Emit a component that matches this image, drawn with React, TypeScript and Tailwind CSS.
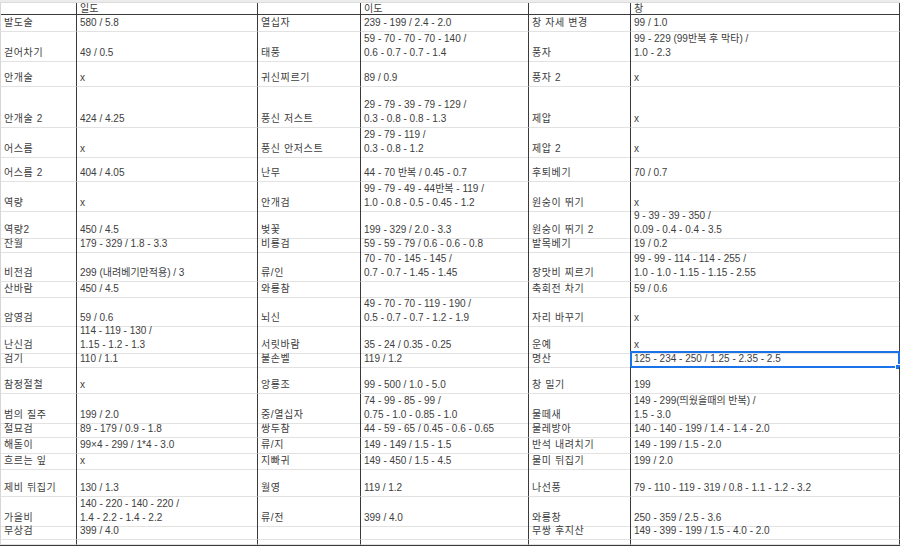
type Row = {
  h: string;
  cells: string[];
  selected?: number;
};

const rows: Row[] = [
  { h: "h-[17px]", cells: ["발도술", "580 / 5.8", "열십자", "239 - 199 / 2.4 - 2.0", "창 자세 변경", "99 / 1.0"] },
  {
    h: "h-[28px]",
    cells: ["걷어차기", "49 / 0.5", "태풍", "59 - 70 - 70 - 70 - 140 /\n0.6 - 0.7 - 0.7 - 1.4", "풍자", "99 - 229 (99반복 후 막타) /\n1.0 - 2.3"],
  },
  { h: "h-[27px]", cells: ["안개술", "x", "귀신찌르기", "89 / 0.9", "풍자 2", "x"] },
  {
    h: "h-[41px]",
    cells: ["안개술 2", "424 / 4.25", "풍신 저스트", "29 - 79 - 39 - 79 - 129 /\n0.3 - 0.8 - 0.8 - 1.3", "제압", "x"],
  },
  { h: "h-[26px]", cells: ["어스름", "x", "풍신 안저스트", "29 - 79 - 119 /\n0.3 - 0.8 - 1.2", "제압 2", "x"] },
  { h: "h-[28px]", cells: ["어스름 2", "404 / 4.05", "난무", "44 - 70 반복 / 0.45 - 0.7", "후퇴베기", "70 / 0.7"] },
  {
    h: "h-[27px]",
    cells: ["역량", "x", "안개검", "99 - 79 - 49 - 44반복 - 119 /\n1.0 - 0.8 - 0.5 - 0.45 - 1.2", "원숭이 뛰기", "x"],
  },
  {
    h: "h-[28px]",
    cells: ["역량2", "450 / 4.5", "벚꽃", "199 - 329 / 2.0 - 3.3", "원숭이 뛰기 2", "9 - 39 - 39 - 350 /\n0.09 - 0.4 - 0.4 - 3.5"],
  },
  { h: "h-[15px]", cells: ["잔월", "179 - 329 / 1.8 - 3.3", "비룡검", "59 - 59 - 79 / 0.6 - 0.6 - 0.8", "발목베기", "19 / 0.2"] },
  {
    h: "h-[30px]",
    cells: [
      "비전검",
      "299 (내려베기만적용) / 3",
      "류/인",
      "70 - 70 - 145 - 145 /\n0.7 - 0.7 - 1.45 - 1.45",
      "장맛비 찌르기",
      "99 - 99 - 114 - 114 - 255 /\n1.0 - 1.0 - 1.15 - 1.15 - 2.55",
    ],
  },
  { h: "h-[15px]", cells: ["산바람", "450 / 4.5", "와룡참", "", "축회전 차기", "59 / 0.6"] },
  {
    h: "h-[27px]",
    cells: ["암영검", "59 / 0.6", "뇌신", "49 - 70 - 70 - 119 - 190 /\n0.5 - 0.7 - 0.7 - 1.2 - 1.9", "자리 바꾸기", "x"],
  },
  { h: "h-[28px]", cells: ["난신검", "114 - 119 - 130 /\n1.15 - 1.2 - 1.3", "서릿바람", "35 - 24 / 0.35 - 0.25", "운예", "x"] },
  {
    h: "h-[15px]",
    cells: ["검기", "110 / 1.1", "불손벨", "119 / 1.2", "명산", "125 - 234 - 250 / 1.25 - 2.35 - 2.5"],
    selected: 5,
  },
  { h: "h-[27px]", cells: ["참정절철", "x", "앙룡조", "99 - 500 / 1.0 - 5.0", "창 밀기", "199"] },
  {
    h: "h-[28px]",
    cells: ["범의 질주", "199 / 2.0", "중/열십자", "74 - 99 - 85 - 99 /\n0.75 - 1.0 - 0.85 - 1.0", "물떼새", "149 - 299(띄웠을때의 반복) /\n1.5 - 3.0"],
  },
  {
    h: "h-[16px]",
    cells: ["절묘검", "89 - 179 / 0.9 - 1.8", "쌍두참", "44 - 59 - 65 / 0.45 - 0.6 - 0.65", "물레방아", "140 - 140 - 199 / 1.4 - 1.4 - 2.0"],
  },
  { h: "h-[16px]", cells: ["해돋이", "99×4 - 299 / 1*4 - 3.0", "류/지", "149 - 149 / 1.5 - 1.5", "반석 내려치기", "149 - 199 / 1.5 - 2.0"] },
  { h: "h-[15px]", cells: ["흐르는 잎", "x", "지빠귀", "149 - 450 / 1.5 - 4.5", "물미 뒤집기", "199 / 2.0"] },
  {
    h: "h-[28px]",
    cells: ["제비 뒤집기", "130 / 1.3", "월영", "119 / 1.2", "나선풍", "79 - 110 - 119 - 319 / 0.8 - 1.1 - 1.2 - 3.2"],
  },
  {
    h: "h-[27px]",
    cells: ["가을비", "140 - 220 - 140 - 220 /\n1.4 - 2.2 - 1.4 - 2.2", "류/전", "399 / 4.0", "와룡창", "250 - 359 / 2.5 - 3.6"],
  },
  { h: "h-[16px]", cells: ["무상검", "399 / 4.0", "", "", "무쌍 후지산", "149 - 399 - 199 / 1.5 - 4.0 - 2.0"] },
  { h: "h-[5px]", cells: ["", "", "", "", "", ""] },
];

const cols = "grid grid-cols-[77px_181px_103px_168px_102px_269px]";

function Cell({ text, index, selected }: { text: string; index: number; selected?: boolean }) {
  const label = index % 2 === 0;
  return (
    <div
      className={`relative flex items-end overflow-visible whitespace-pre border-b border-r border-b-[#e2e2e2] border-r-[#3a3a3a] px-[3px] pb-[1px] ${
        index === 0 ? "border-l border-l-[#d6d6d6]" : ""
      } ${label ? "tracking-[0.6px]" : ""}`}
    >
      <span className="leading-[14px]">{text}</span>
      {selected && (
        <>
          <div className="pointer-events-none absolute -left-px -top-px bottom-[-1px] right-[-1px] border-2 border-[#1a73e8]" />
          <div className="absolute bottom-[-3px] right-[-2px] h-[6px] w-[6px] border border-white bg-[#1a73e8]" />
        </>
      )}
    </div>
  );
}

export default function App() {
  return (
    <div
      className="h-[546px] w-[900px] overflow-hidden bg-white text-[10px] text-[#3d3d3d]"
      style={{ fontFamily: '"Liberation Sans", Arial, "Noto Sans CJK KR", sans-serif' }}
    >
      <div className="h-[3px] border-b border-[#dcdcdc] bg-[#ececec]" />
      <div className={`${cols} h-[12px] border-b border-[#3a3a3a]`}>
        {["", "일도", "", "이도", "", "창"].map((t, i) => (
          <div
            key={i}
            className={`flex items-center border-r border-[#3a3a3a] px-[3px] leading-[12px] ${
              i === 0 ? "border-l border-l-[#d6d6d6]" : ""
            }`}
          >
            {t}
          </div>
        ))}
      </div>
      {rows.map((row, r) => (
        <div key={r} className={`${cols} ${row.h}`}>
          {row.cells.map((c, i) => (
            <Cell key={i} text={c} index={i} selected={row.selected === i} />
          ))}
        </div>
      ))}
      <div className="h-px border-t border-[#3a3a3a]" />
    </div>
  );
}
